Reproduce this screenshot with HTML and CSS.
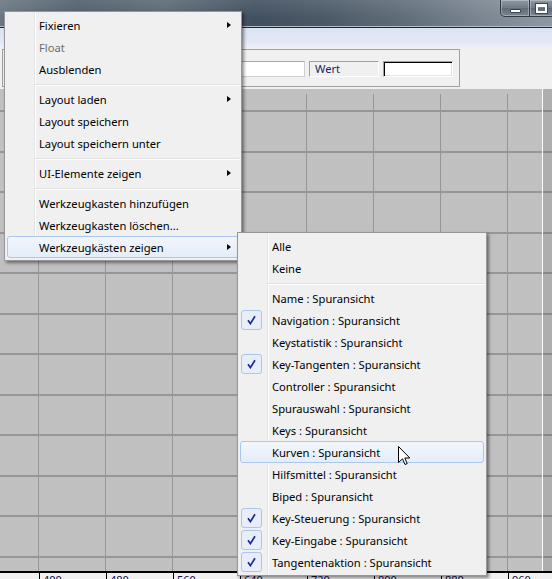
FILE: index.html
```html
<!DOCTYPE html>
<html>
<head>
<meta charset="utf-8">
<link rel="stylesheet" href="styles.css">
</head>
<body>
<div class="window">
  <div class="titlebar">
    <div class="winbtns">
      <div class="wbtn wmin"><span class="min-glyph"></span></div>
      <div class="wbtn wmax"><span class="max-glyph"></span></div>
    </div>
  </div>
  <div class="menubar"></div>
  <div class="toolbar">
    <div class="groupbox">
      <div class="field plain"></div>
      <div class="field label">Wert</div>
      <div class="field sunken"></div>
    </div>
  </div>
  <div class="grid">
    <div class="grid-inner">
      <div class="row first"></div>
      <div class="row"></div>
      <div class="row"></div>
      <div class="row"></div>
      <div class="row"></div>
      <div class="row"></div>
      <div class="row"></div>
      <div class="row"></div>
      <div class="row"></div>
      <div class="row"></div>
      <div class="row"></div>
      <div class="row"></div>
    </div>
    <div class="vstrip"></div>
  </div>
  <div class="ruler">
    <span class="tick">400</span>
    <span class="tick">480</span>
    <span class="tick">560</span>
    <span class="tick">640</span>
    <span class="tick">720</span>
    <span class="tick">800</span>
    <span class="tick">880</span>
    <span class="tick">960</span>
  </div>
</div>

<div class="menu main">
  <div class="item"><span class="gut"></span><span class="txt">Fixieren</span><span class="arrow"></span></div>
  <div class="item dis"><span class="gut"></span><span class="txt">Float</span></div>
  <div class="item"><span class="gut"></span><span class="txt">Ausblenden</span></div>
  <div class="sep"></div>
  <div class="item"><span class="gut"></span><span class="txt">Layout laden</span><span class="arrow"></span></div>
  <div class="item"><span class="gut"></span><span class="txt">Layout speichern</span></div>
  <div class="item"><span class="gut"></span><span class="txt">Layout speichern unter</span></div>
  <div class="sep"></div>
  <div class="item"><span class="gut"></span><span class="txt">UI-Elemente zeigen</span><span class="arrow"></span></div>
  <div class="sep"></div>
  <div class="item"><span class="gut"></span><span class="txt">Werkzeugkasten hinzufügen</span></div>
  <div class="item"><span class="gut"></span><span class="txt">Werkzeugkasten löschen...</span></div>
  <div class="item hl"><span class="gut"></span><span class="txt">Werkzeugkästen zeigen</span><span class="arrow"></span></div>
</div>

<div class="menu sub">
  <div class="item"><span class="gut"></span><span class="txt">Alle</span></div>
  <div class="item"><span class="gut"></span><span class="txt">Keine</span></div>
  <div class="sep"></div>
  <div class="item"><span class="gut"></span><span class="txt">Name : Spuransicht</span></div>
  <div class="item"><span class="gut"><span class="chk"><svg width="9" height="10" viewBox="0 0 9 10"><path d="M1 5.2 L3.4 8.6 L8 1.2" fill="none" stroke="#1b2b8f" stroke-width="1.7"/></svg></span></span><span class="txt">Navigation : Spuransicht</span></div>
  <div class="item"><span class="gut"></span><span class="txt">Keystatistik : Spuransicht</span></div>
  <div class="item"><span class="gut"><span class="chk"><svg width="9" height="10" viewBox="0 0 9 10"><path d="M1 5.2 L3.4 8.6 L8 1.2" fill="none" stroke="#1b2b8f" stroke-width="1.7"/></svg></span></span><span class="txt">Key-Tangenten : Spuransicht</span></div>
  <div class="item"><span class="gut"></span><span class="txt">Controller : Spuransicht</span></div>
  <div class="item"><span class="gut"></span><span class="txt">Spurauswahl : Spuransicht</span></div>
  <div class="item"><span class="gut"></span><span class="txt">Keys : Spuransicht</span></div>
  <div class="item hl"><span class="gut"></span><span class="txt">Kurven : Spuransicht</span></div>
  <div class="item"><span class="gut"></span><span class="txt">Hilfsmittel : Spuransicht</span></div>
  <div class="item"><span class="gut"></span><span class="txt">Biped : Spuransicht</span></div>
  <div class="item"><span class="gut"><span class="chk"><svg width="9" height="10" viewBox="0 0 9 10"><path d="M1 5.2 L3.4 8.6 L8 1.2" fill="none" stroke="#1b2b8f" stroke-width="1.7"/></svg></span></span><span class="txt">Key-Steuerung : Spuransicht</span></div>
  <div class="item"><span class="gut"><span class="chk"><svg width="9" height="10" viewBox="0 0 9 10"><path d="M1 5.2 L3.4 8.6 L8 1.2" fill="none" stroke="#1b2b8f" stroke-width="1.7"/></svg></span></span><span class="txt">Key-Eingabe : Spuransicht</span></div>
  <div class="item"><span class="gut"><span class="chk"><svg width="9" height="10" viewBox="0 0 9 10"><path d="M1 5.2 L3.4 8.6 L8 1.2" fill="none" stroke="#1b2b8f" stroke-width="1.7"/></svg></span></span><span class="txt">Tangentenaktion : Spuransicht</span></div>
</div>

<svg class="cursor" width="13" height="20" viewBox="0 0 13 20">
  <path d="M0.5 0.5 L0.5 16.5 L4.5 12.8 L7 18.5 L9.2 17.6 L6.8 12 L11.8 12 Z" fill="#fff" stroke="#000" stroke-width="1" stroke-linejoin="miter"/>
</svg>
</body>
</html>
```

FILE: styles.css
```css
* { box-sizing: border-box; margin: 0; padding: 0; }
html, body { width: 552px; height: 579px; overflow: hidden; }
body {
  position: relative;
  background: #f0f0f0;
  font-family: "Noto Sans", "DejaVu Sans", sans-serif;
}

.window {
  display: flex;
  flex-direction: column;
  height: 579px;
}

/* title bar */
.titlebar {
  flex: none;
  height: 28px;
  display: flex;
  justify-content: flex-end;
  align-items: flex-start;
  overflow: hidden;
  border-bottom: 1px solid #1d2833;
  box-shadow: inset 0 -1px 0 #b4bdc6;
  background:
    linear-gradient(180deg, rgba(255,255,255,0.10), rgba(255,255,255,0) 70%),
    linear-gradient(90deg, #6a7682 0%, #4f5d6b 14%, #5b6874 30%, #404f5f 46%, #4a5866 58%, #5e6b77 72%, #7b8692 88%, #8e98a2 100%);
}
.winbtns {
  display: flex;
  margin-right: -5px;
}
.wbtn {
  height: 17px;
  display: flex;
  align-items: center;
  justify-content: center;
  border: 1px solid #2f3a45;
  border-top: none;
  box-shadow: inset 0 0 0 1px rgba(255,255,255,0.30);
  background: linear-gradient(180deg, #8e98a2 0%, #6f7a86 50%, #5f6b77 52%, #7a8591 100%);
}
.wmin {
  width: 30px;
  border-bottom-left-radius: 5px;
}
.wmax {
  width: 28px;
  margin-left: -1px;
}
.min-glyph {
  display: block;
  width: 11px;
  height: 4px;
  margin-top: 5px;
  background: #fff;
  border: 1px solid #3a4551;
  border-radius: 1px;
}
.max-glyph {
  display: block;
  width: 11px;
  height: 9px;
  margin-left: -3px;
  border: 2px solid #fff;
  border-top-width: 3px;
  outline: 1px solid #3a4551;
}

/* menu bar */
.menubar {
  flex: none;
  height: 19px;
  background: linear-gradient(180deg, #dbe2f3 0%, #e3e8f6 70%, #eceff8 100%);
}

/* tool bar */
.toolbar {
  flex: none;
  height: 42px;
  padding-top: 2px;
  padding-left: 2px;
  background: #f0f0f0;
}
.groupbox {
  width: 458px;
  height: 38px;
  border: 1px solid #a0a0a0;
  display: flex;
  justify-content: flex-end;
  align-items: flex-start;
  gap: 4px;
  padding-top: 11px;
  padding-right: 6px;
}
.field {
  height: 16px;
  width: 70px;
}
.plain {
  width: 90px;
  background: #fff;
  border: 1px solid #d0d0d0;
  border-top-color: #a8a8a8;
}
.label {
  border-top: 1px solid #a0a0a0;
  border-left: 1px solid #a0a0a0;
  border-right: 1px solid #fff;
  border-bottom: 1px solid #fff;
  background: #f0f0f0;
  padding-left: 5px;
  font-size: 11.2px;
  line-height: 14px;
  color: #1c1f5c;
}
.sunken {
  background: #fff;
  border-top: 1px solid #a0a0a0;
  border-left: 1px solid #a0a0a0;
  border-right: 1px solid #fff;
  border-bottom: 1px solid #fff;
  box-shadow: inset 1px 1px 0 #000, inset -1px -1px 0 #e3e3e3;
}

/* grid area */
.grid {
  flex: none;
  height: 482px;
  position: relative;
  padding-top: 5px;
  background: #c0c0c0;
  overflow: hidden;
}
.grid-inner {
  height: 100%;
  background-image: repeating-linear-gradient(90deg, transparent 0 38px, #969696 38px 39px, transparent 39px 67px);
}
.row {
  height: 40.55px;
  border-bottom: 2px solid #969696;
}
.row.first {
  height: 18px;
}
.vstrip {
  position: absolute;
  top: 0;
  right: 0;
  bottom: 0;
  width: 10px;
  border-left: 1px solid #fff;
  background: rgba(0,0,0,0.09);
}

/* ruler */
.ruler {
  flex: none;
  height: 8px;
  border-top: 2px solid #000;
  background: #f0f0f0;
  display: flex;
  padding-left: 39px;
  overflow: hidden;
}
.tick {
  flex: none;
  width: 67px;
  height: 6px;
  border-left: 1px solid #000;
  padding-left: 3px;
  padding-top: 1px;
  font-size: 11px;
  line-height: 11px;
  color: #0c0c4a;
}

/* popup menus */
.menu {
  position: absolute;
  border: 1px solid #979797;
  padding: 2px;
  background:
    linear-gradient(90deg, transparent 29px, #e2e3e3 29px 30px, #ffffff 30px 31px, transparent 31px),
    #f0f0f0;
  box-shadow: 2px 2px 3px rgba(0,0,0,0.45);
  font-size: 11.2px;
  color: #000;
}
.main {
  left: 4px;
  top: 11px;
  width: 238px;
}
.sub {
  left: 237px;
  top: 232px;
  width: 250px;
}
.item {
  height: 22px;
  display: flex;
  align-items: center;
  border: 1px solid transparent;
  border-radius: 3px;
  white-space: nowrap;
}
.item.hl {
  border-color: #aac8ee;
  background: linear-gradient(180deg, #f2f6fc 0%, #e5edf9 100%);
}
.item.dis {
  color: #6d6d6d;
}
.gut {
  flex: none;
  width: 31px;
  align-self: stretch;
  display: flex;
}
.txt {
  align-self: flex-start;
  line-height: 20px;
  padding-top: 1px;
}
.chk {
  width: 21px;
  height: 20px;
  border: 1px solid #a9c6ec;
  border-radius: 3px;
  background: #e7eef9;
  display: flex;
  align-items: center;
  justify-content: center;
}
.arrow {
  margin-left: auto;
  margin-right: 7px;
  width: 0;
  height: 0;
  border-left: 4px solid #000;
  border-top: 3.5px solid transparent;
  border-bottom: 3.5px solid transparent;
}
.sep {
  height: 8px;
  padding-top: 4px;
  margin-left: 28px;
}
.sep::before {
  content: "";
  display: block;
  border-top: 1px solid #e0e0e0;
  border-bottom: 1px solid #ffffff;
}

.cursor {
  position: absolute;
  left: 398px;
  top: 446px;
}
```
